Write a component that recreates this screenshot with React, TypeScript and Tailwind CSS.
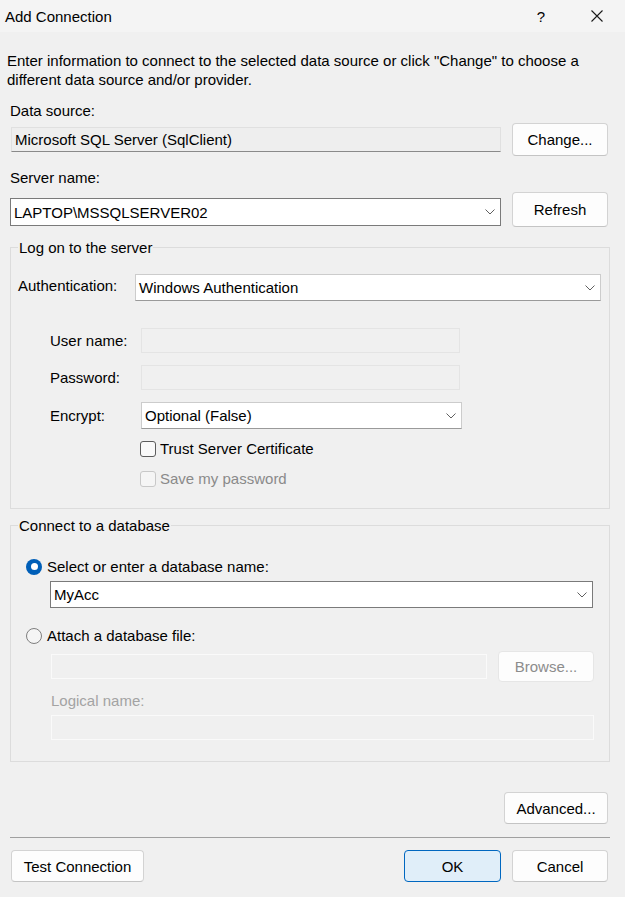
import React from "react";

// small chevron used in the combo boxes
function Chevron() {
  return (
    <svg width="10" height="6" viewBox="0 0 10 6" className="shrink-0">
      <path d="M0.5 0.5 L5 5 L9.5 0.5" fill="none" stroke="#606060" strokeWidth="1" />
    </svg>
  );
}

function Combo({ value, className }: { value: string; className: string }) {
  return (
    <div className={`flex items-center justify-between bg-white pl-[3px] pr-[5px] ${className}`}>
      <span className="whitespace-nowrap">{value}</span>
      <Chevron />
    </div>
  );
}

function Button({
  label,
  className,
  disabled,
}: {
  label: string;
  className: string;
  disabled?: boolean;
}) {
  return (
    <button
      className={`flex items-center justify-center rounded-[4px] border border-[#d3d3d3] border-b-[#c4c4c4] bg-[#fdfdfd] ${
        disabled ? "text-[#8c8c8c] border-[#e6e6e6] border-b-[#e6e6e6] bg-[#f8f8f8]" : "text-black"
      } ${className}`}
    >
      {label}
    </button>
  );
}

function Checkbox({ label, disabled }: { label: string; disabled?: boolean }) {
  return (
    <div className="flex h-[19px] items-center pl-[129px]">
      <span
        className={`h-[16px] w-[16px] rounded-[3px] border ${
          disabled ? "border-[#c8c8c8] bg-[#f5f5f5]" : "border-[#5c5c5c] bg-[#f9f9f9]"
        }`}
      />
      <span className={`ml-[4px] ${disabled ? "text-[#8a8a8a]" : ""}`}>{label}</span>
    </div>
  );
}

function Radio({ label, checked }: { label: string; checked?: boolean }) {
  return (
    <div className="flex h-[19px] items-center pl-[15px]">
      {checked ? (
        <span className="flex h-[16px] w-[16px] items-center justify-center rounded-full bg-[#005fb8]">
          <span className="h-[7px] w-[7px] rounded-full bg-white" />
        </span>
      ) : (
        <span className="h-[16px] w-[16px] rounded-full border border-[#7f7f7f] bg-[#f5f5f5]" />
      )}
      <span className="ml-[5px]">{label}</span>
    </div>
  );
}

export default function App() {
  return (
    <div className="h-[897px] w-[625px] overflow-hidden bg-[#f0f0f0] font-['Liberation_Sans',Arial,sans-serif] text-[15px] leading-[19px] text-black">
      {/* Title bar */}
      <div className="flex h-[32px] items-center bg-[#f4f4f4]">
        <span className="ml-[5px] flex-1">Add Connection</span>
        <div className="w-[46px] text-center">?</div>
        <div className="ml-[10px] flex w-[46px] justify-center">
          <svg width="12" height="12" viewBox="0 0 12 12">
            <path d="M0.5 0.5 L11.5 11.5 M11.5 0.5 L0.5 11.5" stroke="#1a1a1a" strokeWidth="1.1" />
          </svg>
        </div>
        <div className="w-[5px]" />
      </div>

      <p className="whitespace-nowrap px-[7px] pt-[19px]">
        Enter information to connect to the selected data source or click "Change" to choose a
        <br />
        different data source and/or provider.
      </p>

      <div className="ml-[10px] w-[600px]">
        {/* Data source */}
        <div className="mt-[12px]">Data source:</div>
        <div className="mt-[3px] flex items-start">
          <div className="ml-[1px] mt-[4px] flex h-[25px] w-[490px] items-center border border-[#e0e0e0] border-b-[#8a8a8a] bg-[#eeeeee] pl-[3px]">
            Microsoft SQL Server (SqlClient)
          </div>
          <Button label="Change..." className="ml-[11px] h-[33px] w-[96px]" />
        </div>

        {/* Server name */}
        <div className="mt-[12px]">Server name:</div>
        <div className="mt-[5px] flex items-start">
          <Combo value="LAPTOP\MSSQLSERVER02" className="mt-[6px] h-[28px] w-[491px] border border-[#7a7a7a]" />
          <Button label="Refresh" className="ml-[11px] h-[35px] w-[96px]" />
        </div>

        {/* Log on to the server */}
        <fieldset className="mt-[11px] border border-[#dcdcdc] pb-[20px]">
          <legend className="ml-[7px] px-[1px]">Log on to the server</legend>

          <div className="mt-[17px] flex items-start pl-[7px]">
            <span className="mt-[2px] w-[117px]">Authentication:</span>
            <Combo
              value="Windows Authentication"
              className="h-[27px] w-[466px] border border-[#cccccc] border-b-[#9a9a9a]"
            />
          </div>

          <div className="mt-[27px] flex items-center pl-[39px]">
            <span className="w-[91px]">User name:</span>
            <div className="h-[25px] w-[319px] border border-[#e4e4e4] bg-[#f0f0f0]" />
          </div>

          <div className="mt-[12px] flex items-center pl-[39px]">
            <span className="w-[91px]">Password:</span>
            <div className="h-[25px] w-[319px] border border-[#e4e4e4] bg-[#f0f0f0]" />
          </div>

          <div className="mt-[12px] flex items-center pl-[39px]">
            <span className="w-[91px]">Encrypt:</span>
            <Combo
              value="Optional (False)"
              className="h-[27px] w-[321px] border border-[#cccccc] border-b-[#9a9a9a]"
            />
          </div>

          <div className="mt-[10px]">
            <Checkbox label="Trust Server Certificate" />
          </div>
          <div className="mt-[11px]">
            <Checkbox label="Save my password" disabled />
          </div>
        </fieldset>

        {/* Connect to a database */}
        <fieldset className="mt-[7px] border border-[#dcdcdc] pb-[21px]">
          <legend className="ml-[7px] px-[1px]">Connect to a database</legend>

          <div className="mt-[22px]">
            <Radio label="Select or enter a database name:" checked />
          </div>
          <Combo value="MyAcc" className="ml-[39px] mt-[5px] h-[27px] w-[543px] border border-[#7a7a7a]" />

          <div className="mt-[18px]">
            <Radio label="Attach a database file:" />
          </div>
          <div className="ml-[40px] mt-[6px] flex items-start">
            <div className="mt-[3px] h-[25px] w-[436px] border border-[#fafafa] bg-[#f0f0f0]" />
            <Button label="Browse..." disabled className="ml-[11px] h-[31px] w-[96px]" />
          </div>

          <div className="ml-[40px] mt-[9px] text-[#a3a3a3]">Logical name:</div>
          <div className="ml-[40px] mt-[5px] h-[25px] w-[543px] border border-[#fafafa] bg-[#f0f0f0]" />
        </fieldset>

        <div className="mt-[30px] flex justify-end pr-[2px]">
          <Button label="Advanced..." className="h-[32px] w-[104px]" />
        </div>

        <div className="mt-[13px] h-[1px] bg-[#a0a0a0]" />

        <div className="mt-[12px] flex items-center pr-[2px]">
          <Button label="Test Connection" className="ml-[1px] h-[32px] w-[133px]" />
          <div className="flex-1" />
          <button className="flex h-[32px] w-[97px] items-center justify-center rounded-[4px] border border-[#0067c0] bg-[#e0eef9]">
            OK
          </button>
          <Button label="Cancel" className="ml-[11px] h-[32px] w-[96px]" />
        </div>
      </div>
    </div>
  );
}
